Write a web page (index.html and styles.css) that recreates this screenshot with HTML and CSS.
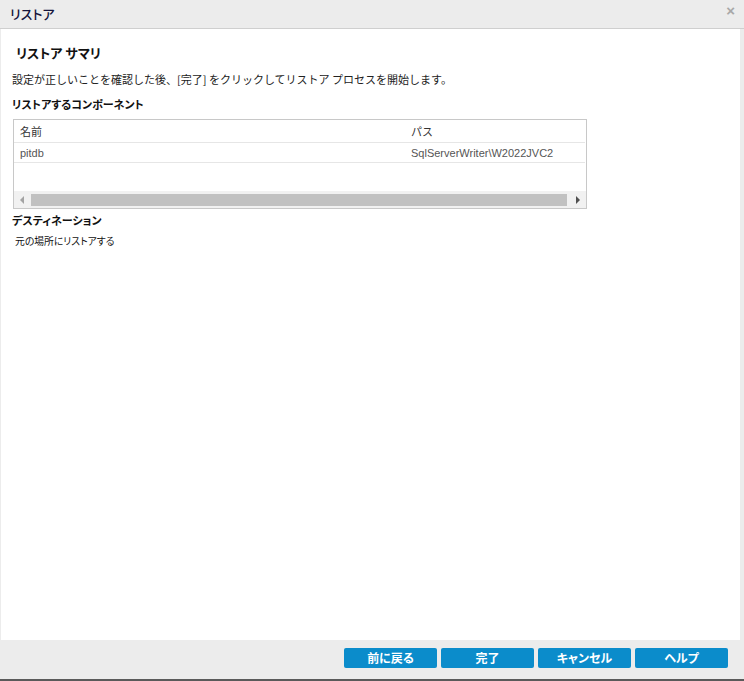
FILE: index.html
```html
<!DOCTYPE html>
<html lang="ja">
<head>
<meta charset="utf-8">
<title>リストア</title>
<link rel="stylesheet" href="styles.css">
</head>
<body>
<div class="dialog">
  <div class="titlebar">
    <span class="title">リストア</span>
    <span class="close">×</span>
  </div>
  <div class="main">
    <h1 class="heading">リストア サマリ</h1>
    <p class="desc">設定が正しいことを確認した後、[完了] をクリックしてリストア プロセスを開始します。</p>
    <h2 class="section">リストアするコンポーネント</h2>
    <div class="grid">
      <div class="row head">
        <div class="cell c1">名前</div>
        <div class="cell c2">パス</div>
      </div>
      <div class="row data">
        <div class="cell c1">pitdb</div>
        <div class="cell c2">SqlServerWriter\W2022JVC2</div>
      </div>
      <div class="empty"></div>
      <div class="hscroll">
        <span class="arrow left"></span>
        <span class="thumb"></span>
        <span class="arrow right"></span>
      </div>
    </div>
    <h2 class="section dest">デスティネーション</h2>
    <p class="dest-text">元の場所にリストアする</p>
  </div>
  <div class="footer">
    <button class="btn">前に戻る</button>
    <button class="btn">完了</button>
    <button class="btn">キャンセル</button>
    <button class="btn">ヘルプ</button>
  </div>
</div>
</body>
</html>
```

FILE: styles.css
```css
* { box-sizing: border-box; }
html, body {
  margin: 0;
  padding: 0;
  width: 744px;
  height: 681px;
  overflow: hidden;
  background: #ececec;
  font-family: "Noto Sans CJK JP", "Liberation Sans", sans-serif;
}
.dialog {
  width: 744px;
  height: 681px;
  display: flex;
  flex-direction: column;
  background: #ececec;
  border-bottom: 2px solid #5a5a5a;
}
.titlebar {
  height: 29px;
  flex: none;
  display: flex;
  align-items: center;
  justify-content: space-between;
  padding: 0 10px 0 10px;
  border-bottom: 1px solid #cfcfcf;
  background: #ececec;
}
.title {
  font-size: 13px;
  color: #14143c;
  font-weight: 500;
  font-feature-settings: "palt";
  margin-top: -1px;
}
.close {
  font-family: "Liberation Sans", sans-serif;
  font-size: 15px;
  font-weight: bold;
  color: #a8a8a8;
  margin-top: -8px;
  margin-right: -1px;
}
.main {
  flex: none;
  height: 611px;
  margin: 0 4px 0 1px;
  background: #ffffff;
  padding: 14px 0 0 11px;
  color: #111;
}
.heading {
  margin: 0 0 0 4px;
  font-size: 13px;
  font-weight: bold;
  line-height: 20px;
  height: 20px;
  color: #111;
  font-feature-settings: "palt";
}
.desc {
  margin: 8px 0 0 0;
  font-size: 11px;
  line-height: 16px;
  color: #222;
}
.section {
  margin: 9px 0 0 0;
  font-size: 11px;
  font-weight: bold;
  line-height: 16px;
  color: #111;
  font-feature-settings: "palt";
}
.grid {
  margin: 7px 0 0 1px;
  width: 574px;
  height: 90px;
  border: 1px solid #c8c8c8;
  display: flex;
  flex-direction: column;
}
.row {
  display: flex;
  border-bottom: 1px solid #e6e6e6;
  margin-right: 1px;
}
.row.head { height: 23px; align-items: center; }
.row.data { height: 20px; align-items: center; }
.cell {
  font-size: 11px;
  padding-left: 6px;
}
.c1 { width: 391px; }
.c2 { flex: 1; }
.head .cell { color: #333; font-size: 11px; }
.data .cell {
  font-family: "Liberation Sans", sans-serif;
  color: #555;
  font-size: 11px;
}
.empty { flex: 1; }
.hscroll {
  height: 17px;
  background: #f1f1f1;
  display: flex;
  align-items: center;
  padding: 0 4px;
}
.arrow {
  width: 0;
  height: 0;
  border-top: 4px solid transparent;
  border-bottom: 4px solid transparent;
}
.arrow.left {
  border-right: 4px solid #a3a3a3;
  margin-left: 2px;
}
.arrow.right {
  border-left: 4px solid #505050;
  margin-right: 2px;
}
.thumb {
  flex: 1;
  height: 12px;
  background: #c1c1c1;
  margin: 0 9px 0 7px;
}
.section.dest {
  margin-top: 3px;
}
.dest-text {
  margin: 6px 0 0 3px;
  font-size: 9.8px;
  line-height: 14px;
  color: #111;
  font-feature-settings: "palt";
}
.footer {
  flex: 1;
  display: flex;
  justify-content: flex-end;
  align-items: flex-start;
  gap: 4px;
  padding: 8px 16px 0 0;
}
.btn {
  width: 93px;
  height: 20px;
  border: none;
  border-radius: 2px;
  background: #0b8ccb;
  color: #fff;
  font-family: "Noto Sans CJK JP", sans-serif;
  font-weight: bold;
  font-size: 12px;
  line-height: 20px;
  padding: 0;
  font-feature-settings: "palt";
}
```
